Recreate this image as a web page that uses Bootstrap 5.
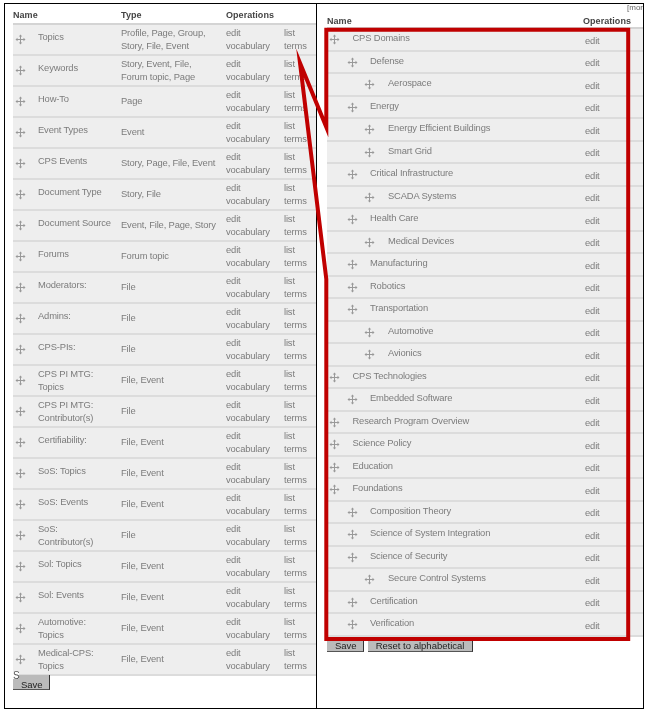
<!DOCTYPE html>
<html lang="en">
<head>
    <meta charset="UTF-8">
    <meta name="viewport" content="width=device-width, initial-scale=1">
    <title>Vocabularies</title>
    <link href="https://cdn.jsdelivr.net/npm/bootstrap@5.3.0/dist/css/bootstrap.min.css" rel="stylesheet">
    <style>
        body { background: #fff; font-family: "Liberation Sans", Arial, sans-serif; font-size: 9.4px; color: #7c7c7c; }
        .shot-frame { width: 640px; height: 706px; margin: 3px 0 0 4px; border: 1px solid #000; position: relative; }
        .shot-blur { filter: blur(.35px); }
        .left-panel { width: 312px; height: 100%; padding: 0 0 0 8px; border-right: 1px solid #000; flex: none; overflow: hidden; }
        .right-panel { flex: 1 1 auto; padding-left: 10px; min-width: 0; }
        .more-link { height: 11px; font-size: 8px; line-height: 7px; margin-left: 300px; white-space: nowrap; color: #666; }
        .vocab-table { width: 100%; table-layout: fixed; border-collapse: collapse; }
        .vocab-table th { font-weight: bold; font-size: 9px; line-height: 12px; letter-spacing: .05px; color: #444; vertical-align: top; padding: 0; }
        .vocab-table td { background: #eee; padding: 0; vertical-align: middle; line-height: 12.5px; letter-spacing: -.15px; }
        .left-table thead tr { height: 20px; border-bottom: 2px solid #d4d4d4; }
        .left-table th { padding-top: 5px; }
        .left-table tbody tr { height: 31px; border-bottom: 2px solid #dcdcdc; }
        .right-table thead tr { height: 13px; border-bottom: 2px solid #d4d4d4; }
        .right-table tbody tr { height: 22.5px; border-bottom: 2px solid #dcdcdc; }
        .right-table td { vertical-align: top; }
        .drag-cell { display: flex; align-items: center; }
        .drag-icon { width: 11px; height: 11px; flex: none; color: #999; }
        .left-table .drag-icon { margin: 0 12px 0 2px; }
        .one-line { padding-bottom: 5px; }
        .right-name { display: flex; align-items: flex-start; padding-top: 3px; }
        .right-name .drag-icon { margin: 2px 12px 0 0; }
        .lvl-0 { padding-left: 1.5px; }
        .lvl-0 .drag-icon, .lvl-2 .drag-icon { margin-right: 13px !important; }
        .lvl-1 { padding-left: 20px; }
        .lvl-2 { padding-left: 37px; }
        .right-edit { padding: 5.5px 0 0 2px !important; }
        .grey-btn { background: #bbb; color: #222; font-size: 9.5px; line-height: 13px; height: 15px; padding: 2px 7.5px 0; border: 0; border-right: 1px solid #333; border-bottom: 1px solid #555; border-radius: 0; }
        .save-btn { padding: 2px 6.5px 0 8px; }
        .left-actions { margin-top: -1px; }
        .left-actions .grey-btn { padding-top: 3px; }
        .stray-s { position: absolute; left: 8px; top: 668px; width: 6px; height: 7px; background: #fff; font-size: 10px; line-height: 7px; color: #555; }
        .callout { position: absolute; left: -4px; top: -3px; width: 647px; height: 712px; pointer-events: none; }
    </style>
</head>
<body class="m-0">
    <div class="shot-frame d-flex">
        <div class="left-panel shot-blur">
            <table class="vocab-table left-table">
                <colgroup><col style="width: 108px"><col style="width: 105px"><col style="width: 58px"><col></colgroup>
                <thead><tr><th>Name</th><th>Type</th><th colspan="2">Operations</th></tr></thead>
                <tbody id="leftRows"></tbody>
            </table>
            <div class="left-actions d-flex"><button class="grey-btn save-btn" type="button">Save</button></div>
        </div>
        <div class="right-panel shot-blur">
            <div class="more-link">[mor</div>
            <table class="vocab-table right-table">
                <colgroup><col style="width: 256px"><col></colgroup>
                <thead><tr><th>Name</th><th>Operations</th></tr></thead>
                <tbody id="rightRows"></tbody>
            </table>
            <div class="d-flex gap-1">
                <button class="grey-btn save-btn" type="button">Save</button>
                <button class="grey-btn" type="button">Reset to alphabetical</button>
            </div>
        </div>
        <span class="stray-s shot-blur">S</span>
        <svg class="callout" viewBox="0 0 647 712">
            <path d="M325.3 126 L325.3 28.7 L627.2 28.7 L627.2 638 L325.3 638 L325.3 278 L299 62 Z" fill="none" stroke="#c00000" stroke-width="4" stroke-miterlimit="20"/>
        </svg>
    </div>

    <svg class="d-none">
        <symbol id="dragGlyph" viewBox="0 0 11 11">
            <path d="M5.5 .5 L7.2 2.5 H3.8 Z M5.5 10.5 L7.2 8.5 H3.8 Z M.5 5.5 L2.5 3.8 V7.2 Z M10.5 5.5 L8.5 3.8 V7.2 Z" fill="currentColor"/>
            <path d="M5.5 2 V9 M2 5.5 H9" stroke="currentColor" stroke-width="1" fill="none"/>
        </symbol>
    </svg>

    <script>
        const handle = '<svg class="drag-icon"><use href="#dragGlyph"></use></svg>';

        const leftData = [
            ["Topics", "Profile, Page, Group,<br>Story, File, Event"],
            ["Keywords", "Story, Event, File,<br>Forum topic, Page"],
            ["How-To", "Page"],
            ["Event Types", "Event"],
            ["CPS Events", "Story, Page, File, Event"],
            ["Document Type", "Story, File"],
            ["Document Source", "Event, File, Page, Story"],
            ["Forums", "Forum topic"],
            ["Moderators:", "File"],
            ["Admins:", "File"],
            ["CPS-PIs:", "File"],
            ["CPS PI MTG:<br>Topics", "File, Event", 2],
            ["CPS PI MTG:<br>Contributor(s)", "File", 2],
            ["Certifiability:", "File, Event"],
            ["SoS: Topics", "File, Event"],
            ["SoS: Events", "File, Event"],
            ["SoS:<br>Contributor(s)", "File", 2],
            ["Sol: Topics", "File, Event"],
            ["Sol: Events", "File, Event"],
            ["Automotive:<br>Topics", "File, Event", 2],
            ["Medical-CPS:<br>Topics", "File, Event", 2]
        ];

        const rightData = [
            ["CPS Domains", 0], ["Defense", 1], ["Aerospace", 2], ["Energy", 1],
            ["Energy Efficient Buildings", 2], ["Smart Grid", 2], ["Critical Infrastructure", 1],
            ["SCADA Systems", 2], ["Health Care", 1], ["Medical Devices", 2], ["Manufacturing", 1],
            ["Robotics", 1], ["Transportation", 1], ["Automotive", 2], ["Avionics", 2],
            ["CPS Technologies", 0], ["Embedded Software", 1], ["Research Program Overview", 0],
            ["Science Policy", 0], ["Education", 0], ["Foundations", 0], ["Composition Theory", 1],
            ["Science of System Integration", 1], ["Science of Security", 1],
            ["Secure Control Systems", 2], ["Certification", 1], ["Verification", 1]
        ];

        document.getElementById("leftRows").innerHTML = leftData.map(row => `
            <tr>
                <td><div class="drag-cell">${handle}<span class="${row[2] ? "" : "one-line"}">${row[0]}</span></div></td>
                <td>${row[1]}</td>
                <td>edit<br>vocabulary</td>
                <td>list<br>terms</td>
            </tr>`).join("");

        document.getElementById("rightRows").innerHTML = rightData.map(row => `
            <tr>
                <td><div class="right-name lvl-${row[1]}">${handle}<span>${row[0]}</span></div></td>
                <td class="right-edit">edit</td>
            </tr>`).join("");
    </script>

    <script src="https://cdn.jsdelivr.net/npm/bootstrap@5.3.0/dist/js/bootstrap.bundle.min.js"></script>
</body>
</html>
